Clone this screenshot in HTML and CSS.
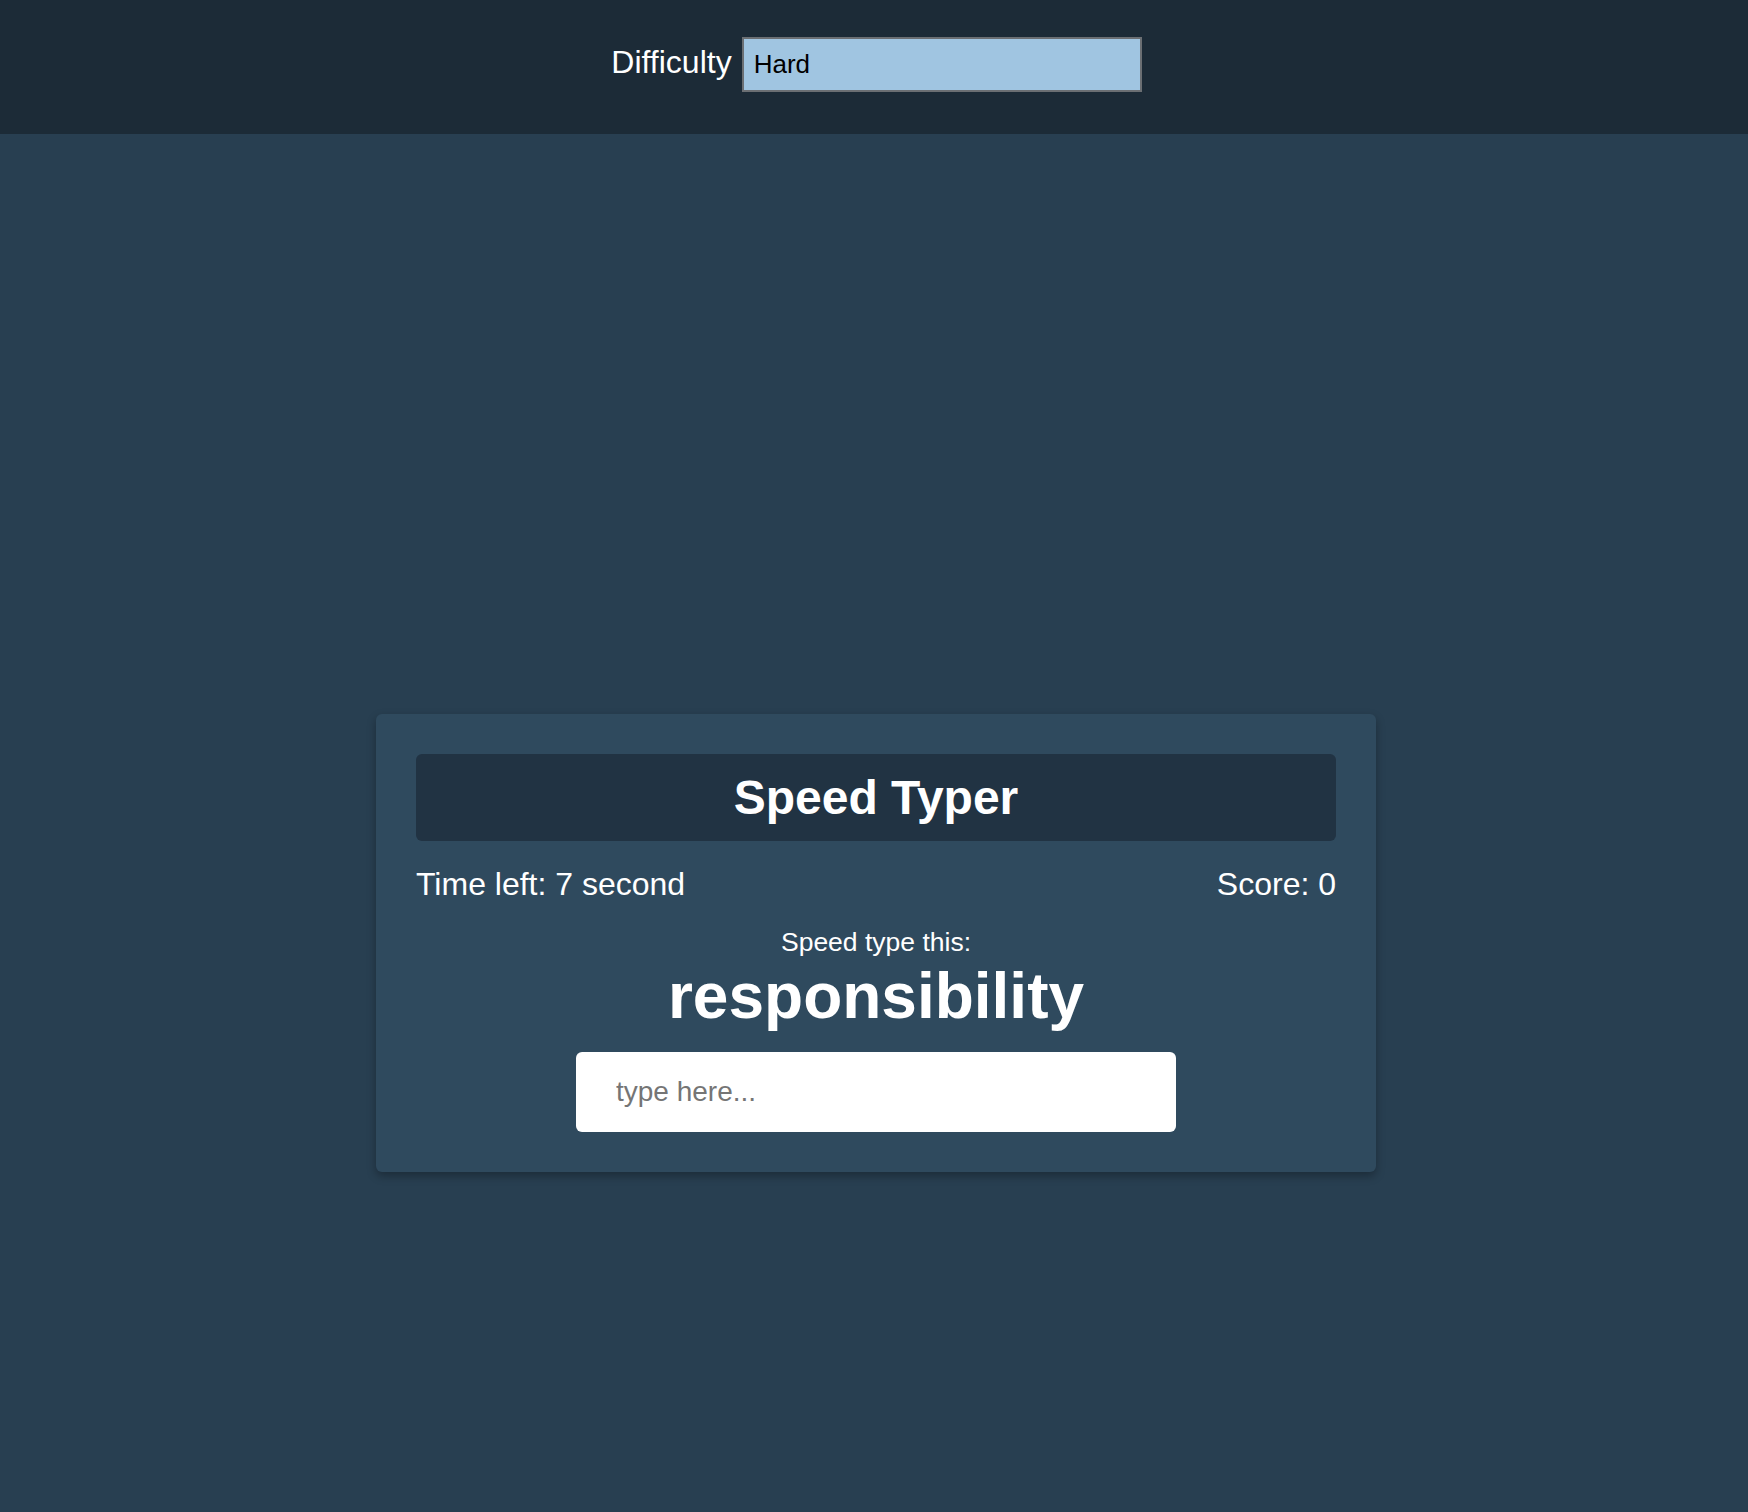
FILE: index.html
```html
<!DOCTYPE html>
<html lang="en">
<head>
<meta charset="UTF-8">
<title>Speed Typer</title>
<link rel="stylesheet" href="styles.css">
</head>
<body>
  <header class="settings">
    <label class="settings-label" for="difficulty">Difficulty</label>
    <select class="settings-select" id="difficulty">
      <option>Easy</option>
      <option>Medium</option>
      <option selected>Hard</option>
    </select>
  </header>
  <main class="stage">
    <div class="card">
      <h2 class="card-title">Speed Typer</h2>
      <div class="stats">
        <span>Time left: 7 second</span>
        <span>Score: 0</span>
      </div>
      <div class="prompt">Speed type this:</div>
      <div class="word">responsibility</div>
      <input class="type-input" type="text" placeholder="type here...">
    </div>
  </main>
</body>
</html>
```

FILE: styles.css
```css
* { box-sizing: border-box; }

html, body {
  margin: 0;
  padding: 0;
}

body {
  background-color: #283f51;
  color: #ffffff;
  font-family: "Liberation Sans", Arial, sans-serif;
  min-height: 1512px;
}

.settings {
  background-color: #1c2b37;
  height: 134px;
  display: flex;
  justify-content: center;
  align-items: flex-start;
  padding-top: 37px;
  padding-left: 5px;
  gap: 10px;
}

.settings-label {
  font-size: 32px;
  line-height: 54px;
  height: 54px;
  color: #ffffff;
  position: relative;
  top: -2px;
}

.settings-select {
  width: 400px;
  height: 55px;
  background-color: #a0c5e1;
  border: 2px solid #6b6f73;
  border-radius: 0;
  font-family: "Liberation Sans", Arial, sans-serif;
  font-size: 26px;
  color: #000000;
  padding: 0 10px 2px;
  appearance: none;
  -webkit-appearance: none;
}

.stage {
  display: flex;
  justify-content: center;
  padding-top: 580px;
  padding-left: 4px;
}

.card {
  width: 1000px;
  background-color: #2f4a5e;
  border-radius: 6px;
  padding: 40px;
  box-shadow: 0 4px 10px rgba(0, 0, 0, 0.3);
  display: flex;
  flex-direction: column;
  align-items: center;
  text-align: center;
}

.card-title {
  align-self: stretch;
  margin: 0;
  background-color: #213343;
  border-radius: 6px;
  padding: 16px;
  font-size: 48px;
  line-height: 55px;
  font-weight: bold;
}

.stats {
  align-self: stretch;
  display: flex;
  justify-content: space-between;
  margin-top: 25px;
  font-size: 32px;
  line-height: 37px;
}

.prompt {
  margin-top: 24px;
  font-size: 26.5px;
  line-height: 30px;
}

.word {
  margin-top: 2px;
  font-size: 64px;
  line-height: 74px;
  font-weight: bold;
}

.type-input {
  margin-top: 19px;
  width: 600px;
  height: 80px;
  border: none;
  border-radius: 6px;
  background-color: #ffffff;
  padding: 0 40px;
  font-family: "Liberation Sans", Arial, sans-serif;
  font-size: 28px;
  color: #333333;
  outline: none;
}

.type-input::placeholder {
  color: #757575;
}
```
